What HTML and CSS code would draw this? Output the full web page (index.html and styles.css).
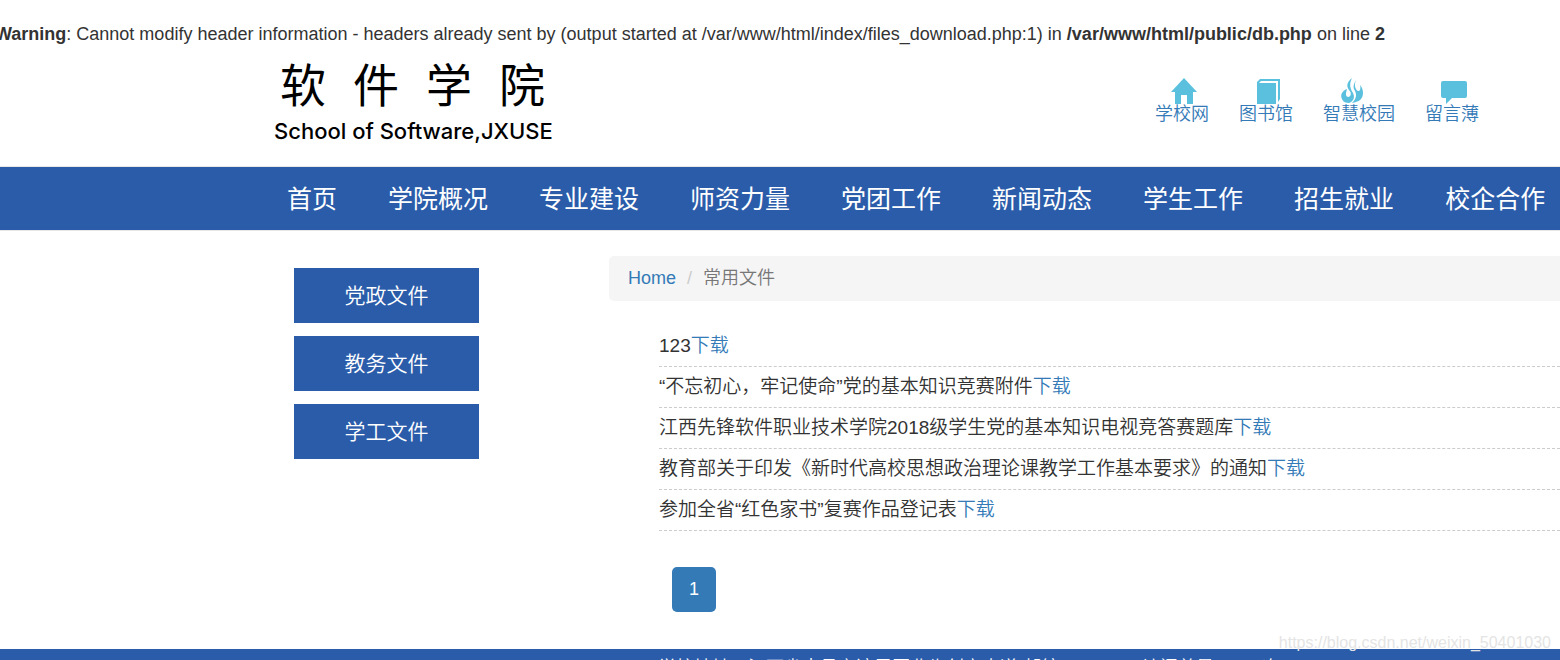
FILE: index.html
```html
<!DOCTYPE html>
<html lang="zh-CN">
<head>
    <meta charset="UTF-8">
    <meta name="viewport" content="width=device-width, initial-scale=1.0">
    <title>常用文件</title>
    <link rel="stylesheet" href="styles.css">
</head>
<body>
    <p class="warning"><b>Warning</b>: Cannot modify header information - headers already sent by (output started at /var/www/html/index/files_download.php:1) in <b>/var/www/html/public/db.php</b> on line <b>2</b></p>

    <header class="header">
        <div class="logo">
            <div class="logo-cn"><span>软</span><span>件</span><span>学</span><span>院</span></div>
            <div class="logo-en">School of Software,JXUSE</div>
        </div>
        <div class="quick-links">
            <a href="#">
                <svg class="icon" viewBox="0 0 26 26"><path d="M13 0 26 14H22V26H16V17H10V26H4V14H0Z"/></svg>
                学校网
            </a>
            <a href="#">
                <svg class="icon" viewBox="0 0 26 26"><path d="M5 1H25V21L23 24V3H6L4 5H21V26H2V4Z"/></svg>
                图书馆
            </a>
            <a href="#">
                <svg class="icon" viewBox="0 0 26 26"><path d="M13 0C8 4 7 8 10 12C13 15 12 19 9 19C6 18 7 15 8 11C3 13 1 17 3 21C4 24 7 25 10 25C15 23 16 19 14 15C11 10 10 6 13 0ZM17 2C14 7 14 10 16 13C18 17 17 21 13 25C20 24 24 21 24 15C24 12 23 9 21 7C22 11 21 13 19 13C16 11 15 7 17 2Z"/></svg>
                智慧校园
            </a>
            <a href="#">
                <svg class="icon" viewBox="0 0 26 26"><path d="M2 3H24Q26 3 26 5V18Q26 20 24 20H11L5 26V20H2Q0 20 0 18V5Q0 3 2 3Z"/></svg>
                留言薄
            </a>
        </div>
    </header>

    <nav class="navbar">
        <a href="#">首页</a>
        <a href="#">学院概况</a>
        <a href="#">专业建设</a>
        <a href="#">师资力量</a>
        <a href="#">党团工作</a>
        <a href="#">新闻动态</a>
        <a href="#">学生工作</a>
        <a href="#">招生就业</a>
        <a href="#">校企合作</a>
    </nav>

    <div class="main">
        <div class="sidebar">
            <a href="#">党政文件</a>
            <a href="#">教务文件</a>
            <a href="#">学工文件</a>
        </div>
        <div class="content">
            <div class="breadcrumb">
                <a href="#">Home</a>
                <span class="slash">/</span>
                <span>常用文件</span>
            </div>
            <ul class="file-list">
                <li>123<a href="#">下载</a></li>
                <li>“不忘初心，牢记使命”党的基本知识竞赛附件<a href="#">下载</a></li>
                <li>江西先锋软件职业技术学院2018级学生党的基本知识电视竞答赛题库<a href="#">下载</a></li>
                <li>教育部关于印发《新时代高校思想政治理论课教学工作基本要求》的通知<a href="#">下载</a></li>
                <li>参加全省“红色家书”复赛作品登记表<a href="#">下载</a></li>
            </ul>
            <div class="pagination"><a href="#">1</a></div>
        </div>
    </div>

    <footer class="footer">学校地址：江西省南昌市湾里区业缘创立大道 邮编：330000 访问总量：100次</footer>
    <div class="watermark">https://blog.csdn.net/weixin_50401030</div>
</body>
</html>
```

FILE: styles.css
```css
* {
    box-sizing: border-box;
}
html {
    overflow: hidden;
}
body {
    margin: 0;
    height: 100vh;
    overflow: hidden;
    font-family: "Liberation Sans", "Noto Sans CJK SC", sans-serif;
    font-size: 18px;
    font-weight: 350;
    line-height: 25px;
    color: #333;
    background-color: #fff;
    white-space: nowrap;
}
a {
    color: #337ab7;
    text-decoration: none;
}
b {
    font-weight: 700;
}
.warning {
    margin: 22px 0 0 -5px;
}
.header {
    display: flex;
    justify-content: space-between;
    height: 119px;
    padding: 12px 81px 0 274px;
}
.logo {
    color: #000;
}
.logo-cn {
    display: flex;
    gap: 27px;
    padding-left: 6px;
    font-size: 46px;
    font-weight: 400;
    line-height: 54px;
}
.logo-en {
    font-family: Inter, "Noto Sans", sans-serif;
    font-size: 22px;
    font-weight: 500;
    line-height: 36px;
}
.quick-links {
    display: flex;
    gap: 30px;
    padding-top: 19px;
}
.icon {
    display: block;
    width: 26px;
    height: 26px;
    margin-left: 16px;
    fill: #5bc0de;
}
.quick-links a {
    line-height: 20px;
}
.navbar {
    display: flex;
    gap: 51px;
    padding: 1px 0 0 287px;
    border-top: 1px solid #e7e7e7;
    border-bottom: 1px solid #e7e7e7;
    background-color: #2a5caa;
}
.navbar a {
    font-size: 25px;
    font-weight: 400;
    line-height: 62px;
    color: #fff;
}
.main {
    display: flex;
    gap: 130px;
    padding: 25px 0 37px 294px;
}
.sidebar {
    display: flex;
    flex-direction: column;
    flex-shrink: 0;
    gap: 13px;
    width: 185px;
    padding-top: 12px;
}
.sidebar a {
    font-size: 21px;
    line-height: 55px;
    text-align: center;
    color: #fff;
    background-color: #2a5caa;
}
.content {
    flex: 1;
}
.breadcrumb {
    display: flex;
    gap: 11px;
    padding: 10px 19px;
    border-radius: 5px 0 0 5px;
    color: #777;
    background-color: #f5f5f5;
}
.slash {
    color: #ccc;
}
.file-list {
    margin: 0;
    padding: 25px 0 0 50px;
    list-style: none;
    font-size: 19px;
}
.file-list li {
    line-height: 40px;
    border-bottom: 1px dashed #ccc;
}
.pagination {
    display: flex;
    padding: 36px 0 0 63px;
}
.pagination a {
    padding: 10px 17px;
    border-radius: 5px;
    color: #fff;
    background-color: #337ab7;
}
.footer {
    padding: 7px 0 20px 658px;
    color: #fff;
    background-color: #2a5caa;
}
.watermark {
    position: absolute;
    right: 9px;
    bottom: 5px;
    font-size: 16px;
    color: #e4e4e4;
}
```
